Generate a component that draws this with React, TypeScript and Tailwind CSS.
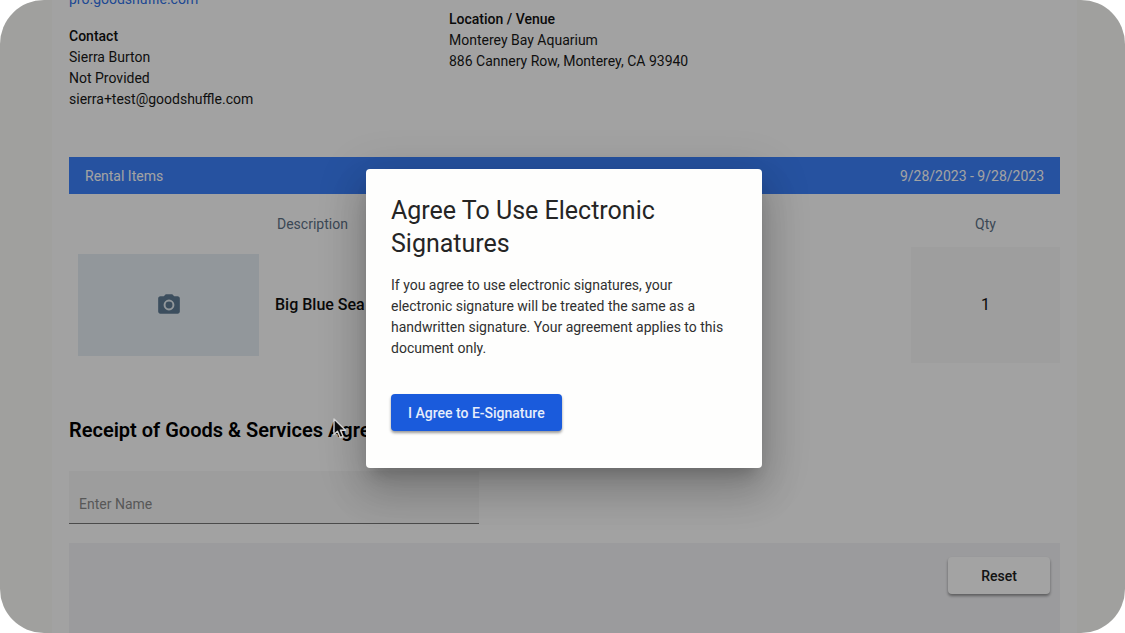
import { useState } from 'react';

interface RentalItem {
  id: number;
  name: string;
  qty: number;
}

const items: RentalItem[] = [{ id: 1, name: 'Big Blue Sea', qty: 1 }];

function CameraIcon() {
  return (
    <svg viewBox="0 0 24 24" className="h-[26px] w-[26px] fill-[#5f7b94]" aria-hidden="true">
      <circle cx="12" cy="12" r="3.200" />
      <path d="M9 2 7.170 4H4C2.900 4 2 4.900 2 6V18C2 19.100 2.900 20 4 20H20C21.100 20 22 19.100 22 18V6C22 4.900 21.100 4 20 4H16.830L15 2ZM12 17A5 5 0 1 1 12 7 5 5 0 0 1 12 17Z" />
    </svg>
  );
}

function CursorIcon() {
  return (
    <svg viewBox="0 0 14 21" className="h-[21px] w-[14px]" aria-hidden="true">
      <path
        d="M1 1V16.500L4.500 13.200 7.200 19.500 10 18.300 7.400 12.200H12.500Z"
        fill="#0c0c0c"
        stroke="#d2d2d2"
        strokeWidth="1.4"
        strokeLinejoin="round"
      />
    </svg>
  );
}

function EventDetails() {
  return (
    <div className="flex h-[168px] text-sm leading-[21px] text-[#181818]">
      <div className="w-[380px] shrink-0">
        <a href="#site" className="text-[#3272e6]">
          pro.goodshuffle.com
        </a>
        <div className="mt-4">
          <p className="font-medium text-[#101010]">Contact</p>
          <p>Sierra Burton</p>
          <p>Not Provided</p>
          <p>sierra+test@goodshuffle.com</p>
        </div>
      </div>
      <div className="pt-5">
        <p className="font-medium text-[#101010]">Location / Venue</p>
        <p>Monterey Bay Aquarium</p>
        <p>886 Cannery Row, Monterey, CA 93940</p>
      </div>
    </div>
  );
}

function RentalItems() {
  return (
    <section>
      <div className="flex h-[37px] items-center justify-between bg-[#3c80fa] px-4 text-sm text-white">
        <h2>Rental Items</h2>
        <span>9/28/2023 - 9/28/2023</span>
      </div>
      <table className="mt-[7px] w-full table-fixed">
        <thead>
          <tr className="h-[46px] text-sm text-[#5d7186]">
            <th className="w-[198px]" aria-label="Photo"></th>
            <th className="px-[10px] text-left font-normal">Description</th>
            <th className="w-[149px] font-normal">Qty</th>
          </tr>
        </thead>
        <tbody>
          {items.map((item) => (
            <tr key={item.id} className="h-[116px] text-base text-[#101010]">
              <td className="pr-2 pl-[9px]">
                <div className="flex h-[102px] items-center justify-center bg-[#e4edf2]">
                  <CameraIcon />
                </div>
              </td>
              <td className="px-2 font-medium">{item.name}</td>
              <td className="bg-[#f7f7f7] text-center">{item.qty}</td>
            </tr>
          ))}
        </tbody>
      </table>
    </section>
  );
}

function Agreement() {
  const [name, setName] = useState('');

  return (
    <section className="mt-[53px]">
      <h2 className="text-xl leading-7 font-semibold text-black">Receipt of Goods &amp; Services Agreement</h2>
      <input
        type="text"
        aria-label="Enter Name"
        placeholder="Enter Name"
        value={name}
        onChange={(e) => setName(e.target.value)}
        className="mt-[27px] block h-[53px] w-[410px] border-b border-[#767676] bg-[#f6f6f6] px-[10px] pt-[14px] text-sm outline-none placeholder:text-[#8a8a8a]"
      />
      <div className="mt-[19px] flex h-[200px] justify-end bg-[#f3f3f6] px-[10px] pt-[14px]">
        <button
          type="button"
          onClick={() => setName('')}
          className="h-[37px] w-[102px] rounded bg-white text-sm font-medium text-[#202020] shadow-[0_2px_3px_rgba(0,0,0,0.4)]"
        >
          Reset
        </button>
      </div>
    </section>
  );
}

function ConsentDialog() {
  return (
    <div className="absolute inset-0 flex items-center justify-center bg-black/36 pt-1 pl-[3px]">
      <div
        role="dialog"
        aria-modal="true"
        aria-labelledby="consent-title"
        className="w-[396px] rounded bg-[#fefefd] px-[25px] pt-[25px] pb-[37px] shadow-[0_11px_15px_-7px_rgba(0,0,0,0.2),0_24px_38px_3px_rgba(0,0,0,0.14),0_9px_46px_8px_rgba(0,0,0,0.12)]"
      >
        <h1 id="consent-title" className="text-[25px] leading-[33px] text-[#252525]">
          Agree To Use Electronic Signatures
        </h1>
        <p className="mt-[15px] max-w-[340px] text-sm leading-[21px] text-[#303030]">
          If you agree to use electronic signatures, your electronic signature will be treated the same as a
          handwritten signature. Your agreement applies to this document only.
        </p>
        <button
          type="button"
          className="mt-[35px] h-[37px] rounded bg-[#1a5bdc] px-[17px] text-sm font-medium text-[#e6edfb] shadow-[0_2px_3px_rgba(0,0,0,0.4)]"
        >
          I Agree to E-Signature
        </button>
      </div>
    </div>
  );
}

export default function App() {
  return (
    <div className="relative h-screen overflow-hidden rounded-[44px] bg-[#fbfbf7] pr-12 pl-[52px] font-['Roboto',sans-serif]">
      <main className="-mt-[11px] bg-[#fefefe] px-[17px]">
        <EventDetails />
        <RentalItems />
        <Agreement />
      </main>
      <ConsentDialog />
      <div className="absolute top-[418px] left-[333px]">
        <CursorIcon />
      </div>
    </div>
  );
}
